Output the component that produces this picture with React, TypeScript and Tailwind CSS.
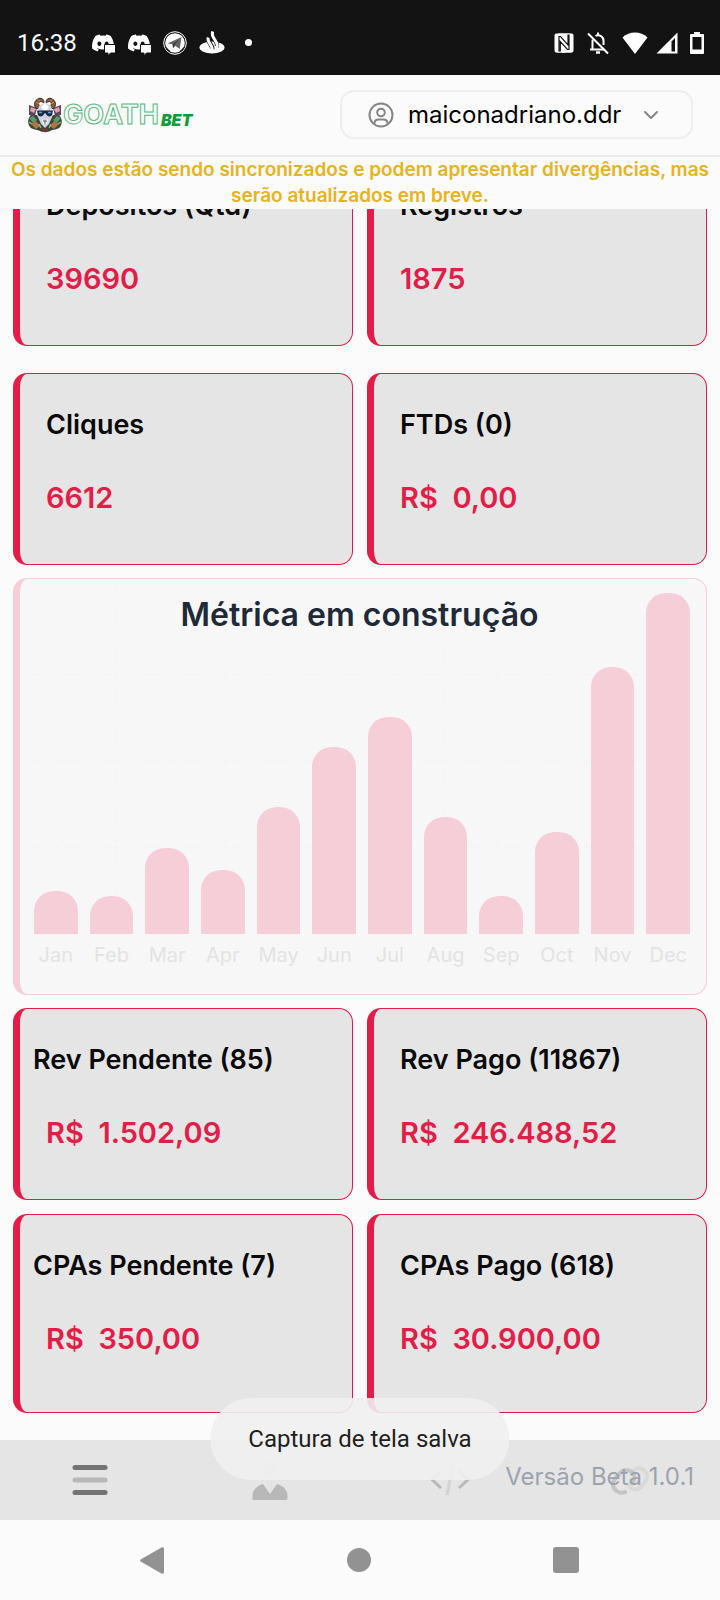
import React from "react";
import { FaDiscord } from "react-icons/fa";
import { ChevronDown } from "lucide-react";

const months = [
  { name: "Jan", height: 43 },
  { name: "Feb", height: 38 },
  { name: "Mar", height: 86 },
  { name: "Apr", height: 64 },
  { name: "May", height: 127 },
  { name: "Jun", height: 187 },
  { name: "Jul", height: 217 },
  { name: "Aug", height: 117 },
  { name: "Sep", height: 38 },
  { name: "Oct", height: 102 },
  { name: "Nov", height: 267 },
  { name: "Dec", height: 341 },
];

function DiscordNotification() {
  return (
    <span className="relative block h-6 w-6">
      <FaDiscord className="h-6 w-6" />
      <svg viewBox="0 0 12 12" className="absolute -bottom-px -right-px h-3 w-3" aria-hidden="true">
        <path d="M.500.500h11v8.500H6.500L4 12V9H.500z" fill="#fff" stroke="#131313" strokeWidth="1" />
      </svg>
    </span>
  );
}

function StatusBar() {
  return (
    <div className="flex h-[75px] items-center justify-between bg-[#131313] pl-[17px] pr-4 pt-2.5 text-white">
      <div className="flex items-center gap-3">
        <span className="mr-0.5 font-['Roboto',sans-serif] text-2xl leading-6">16:38</span>
        <DiscordNotification />
        <DiscordNotification />
        <svg viewBox="0 0 24 24" className="h-6 w-6" aria-hidden="true">
          <circle cx="12" cy="12" r="11.300" fill="none" stroke="#fff" strokeWidth="1" />
          <circle cx="12" cy="12" r="9.800" fill="#fff" />
          <path d="M4.500 12.500 18.500 6l-1.800 12-4.300-3-2.400 2.300-.4-4z" fill="#666" />
          <path d="m9.600 13.300 6.700-5-5 5.700-1.300 3.300z" fill="#333" />
          <path d="M3 16.500a10 10 0 0 0 4 4.200M17 20.700a10 10 0 0 0 4-4.200" stroke="#131313" strokeWidth="1.500" fill="none" />
        </svg>
        <svg viewBox="0 0 26 24" className="h-6 w-[26px]" aria-hidden="true">
          <ellipse cx="13" cy="16.500" rx="12.500" ry="6" fill="#fff" />
          <path d="M9.500 6.500c-.8 2 0 3.500 1 5.200l2 3.300c.7 1.200 1 2 .8 3M13.800 1c-.8 2-.5 3.500.5 5.200l3 5c.9 1.500 1 3 .3 4.500" fill="none" stroke="#131313" strokeWidth="4.400" />
          <path d="M9.300 6.500c-.8 2 0 3.500 1 5.200l2 3.300c.7 1.200 1 2.500.8 4M13.800.5c-.8 2-.5 4 .5 5.700l3 5c.9 1.500 1.200 3.500.3 5.500" fill="none" stroke="#fff" strokeWidth="3" />
        </svg>
        <span className="ml-2 h-[7px] w-[7px] rounded-full bg-white" />
      </div>
      <div className="flex items-center gap-2">
        <svg viewBox="0 0 20 20" className="mr-1 h-5 w-5" aria-hidden="true">
          <path d="M2 .5c2-.5 14-.5 16 0 1 .3 1.500 1 1.500 2.500v14c0 1.500-.5 2.200-1.500 2.500-2 .5-14 .5-16 0-1-.3-1.500-1-1.500-2.500V3C.5 1.500 1 .8 2 .5z" fill="#fff" />
          <path d="M5 18V3.500h1.500L14 12V2h1v14.500h-1.500L6.300 8.500V18z" fill="none" stroke="#131313" strokeWidth="1.200" />
        </svg>
        <svg viewBox="0 0 24 24" className="mr-1 h-6 w-6" fill="none" stroke="#fff" strokeWidth="2" aria-hidden="true">
          <path d="M9.500 4.800A5.500 5.500 0 0 1 17.500 10v4M6.800 8.500c-.2.500-.3 1-.3 1.700V18M4 18.500h14.500" />
          <path d="M12 1.500v3M2 2.500l20 20" />
          <path d="M10 21.500h4" strokeWidth="2.500" />
        </svg>
        <svg viewBox="0 0 26 22" className="h-[22px] w-[26px]" aria-hidden="true">
          <path d="M13 22 .500 5.500C4 2 8.300.500 13 .500S22 2 25.500 5.500z" fill="#fff" />
        </svg>
        <svg viewBox="0 0 22 22" className="mr-1 h-[22px] w-[22px]" aria-hidden="true">
          <path d="M.500 21.500 21.500.500v21z" fill="#fff" />
          <path d="M15.500 9.500 19 6v13.500h-3.500z" fill="#131313" />
        </svg>
        <svg viewBox="0 0 14 22" className="h-[22px] w-3.5" aria-hidden="true">
          <path d="M4 0h6v2h3a1 1 0 0 1 1 1v18a1 1 0 0 1-1 1H1a1 1 0 0 1-1-1V3a1 1 0 0 1 1-1h3z" fill="#fff" />
          <path d="M2.500 5h9v12.500h-9z" fill="#131313" />
        </svg>
      </div>
    </div>
  );
}

function GoatMark() {
  return (
    <svg viewBox="0 0 36 36" className="h-9 w-9" aria-hidden="true">
      <path d="M4 18c-3 3-4 8-1 12 2 3 7 2 10 4 2 1.500 8 1.500 10 0 3-2 8-1 10-4 3-4 2-9-1-12z" fill="#3a4636" />
      <path d="M2 8l8 3-2 8-6-1z" fill="#5b4560" />
      <path d="M34 8l-8 3 2 8 6-1z" fill="#5b4560" />
      <path d="M4 10l5 2-2 4-4-2zM32 10l-5 2 2 4 4-2z" fill="#d8a3ad" />
      <path d="M10 12C6 9 7 3 12 1.500c3-.8 5 1 5 4l-3-1c-3 0-3 3-1 5z" fill="#8a5836" stroke="#3a2620" strokeWidth="1" />
      <path d="M26 12c4-3 3-9-2-10.500-3-.8-5 1-5 4l3-1c3 0 3 3 1 5z" fill="#8a5836" stroke="#3a2620" strokeWidth="1" />
      <path d="M9 5l3 2M11 2.500l2 2M27 5l-3 2M25 2.500l-2 2" stroke="#d79b62" strokeWidth="1" />
      <path d="M12 9l6-4 6 4 2 9-4 9-4 4-4-4-4-9z" fill="#cfd2e0" />
      <path d="M14 10l4-4 4 4-2 3h-4z" fill="#fff" />
      <path d="M10 13.500h16l-1 4.500c-1 2-5 2-6-1l-1-1-1 1c-1 3-5 3-6 1z" fill="#1b2b45" />
      <path d="M12 15.500h3M21 15.500h3" stroke="#5ba3dc" strokeWidth="1.500" />
      <path d="M15 22l3 2 3-2-1 5h-4z" fill="#fff" />
      <path d="M16 24h4M18 24v3" stroke="#4c4b60" strokeWidth="1" />
      <path d="M2 21l4-2 4 4-4 3zM34 21l-4-2-4 4 4 3z" fill="#5c9a6e" />
      <path d="M4 27l5-3 4 5-4 3zM32 27l-5-3-4 5 4 3z" fill="#b0743f" />
      <path d="M2 25l3 2M31 27l3-2M12 27l2 4M24 27l-2 4" stroke="#8abb95" strokeWidth="1.500" />
      <path d="M14 30l4 2 4-2-2 5h-4z" fill="#6d3c36" />
    </svg>
  );
}

function Header() {
  return (
    <header className="flex items-center justify-between border-b-2 border-[#ececec] px-[27px] pb-4 pt-[15px]">
      <a href="#" aria-label="Goath Bet" className="flex items-center">
        <GoatMark />
        <span className="font-['Inter',sans-serif] text-[27px] font-bold leading-8 text-[#fbfbfb] [-webkit-text-stroke:1px_#55b878]">
          GOATH
        </span>
        <span className="ml-0.5 pt-2.5 font-['Inter',sans-serif] text-base font-black italic leading-4 text-[#119b3c]">BET</span>
      </a>
      <button
        type="button"
        className="flex h-[49px] w-[353px] items-center rounded-[14px] border-2 border-[#eeeeee] pl-[26px] pr-7 font-['Inter',sans-serif] text-2xl text-black"
      >
        <svg viewBox="0 0 26 26" className="h-[26px] w-[26px]" fill="none" stroke="#858585" strokeWidth="2" aria-hidden="true">
          <circle cx="13" cy="13" r="11.500" />
          <circle cx="13" cy="10.500" r="3.800" />
          <path d="M6.500 21.500c0-3 1.500-4 4-4h5c2.500 0 4 1 4 4" />
        </svg>
        <span className="ml-3.5 flex-1 text-left">maiconadriano.ddr</span>
        <ChevronDown className="h-6 w-6 text-[#858585]" strokeWidth={2} />
      </button>
    </header>
  );
}

type StatProps = { title: string; value: string; outdent?: boolean; tall?: boolean };

function StatCard({ title, value, outdent, tall }: StatProps) {
  return (
    <article
      className={`rounded-[14px] border border-l-[7px] border-[#e11d48] bg-[#e5e5e5] pl-[26px] pr-3 pt-[33px] ${tall ? "pb-[55px]" : "pb-12"}`}
    >
      <h2 className={`whitespace-nowrap text-[27px] font-semibold leading-9 text-[#0a0a0a] ${outdent ? "-ml-[13px]" : ""}`}>{title}</h2>
      <p className="mt-[37px] whitespace-pre text-[29px] font-semibold leading-9 text-[#e11d48]">{value}</p>
    </article>
  );
}

function StatRow({ children }: { children: React.ReactNode }) {
  return <div className="grid grid-cols-2 gap-[14px]">{children}</div>;
}

function Chart() {
  return (
    <section className="relative my-[13px] rounded-[14px] border border-l-[7px] border-[#f6ced7] bg-[#f7f7f7] pb-[25px] pl-[14px] pr-4 pt-[9px]">
      <div className="relative">
        <svg className="absolute inset-0 h-full w-full" aria-hidden="true">
          {[0, 25, 50, 75].map((y) => (
            <line key={y} x1="0" x2="100%" y1={`${y}%`} y2={`${y}%`} stroke="#f3f3f3" strokeDasharray="5 5" />
          ))}
          {months.map((m, i) => (
            <line
              key={m.name}
              x1={`${((i + 0.5) / 12) * 100}%`}
              x2={`${((i + 0.5) / 12) * 100}%`}
              y1="0"
              y2="100%"
              stroke="#f4f4f4"
              strokeDasharray="5 5"
            />
          ))}
        </svg>
        <div className="relative flex h-[346px] items-end gap-3">
          {months.map((m) => (
            <div key={m.name} className="flex-1 rounded-t-[20px] bg-[#f6ced7]" style={{ height: m.height }} />
          ))}
        </div>
      </div>
      <div className="mt-[7px] flex gap-3 font-['Inter',sans-serif] text-xl leading-7 text-[#e3e3e3]">
        {months.map((m) => (
          <span key={m.name} className="flex flex-1 basis-0 justify-center">
            {m.name}
          </span>
        ))}
      </div>
      <h2 className="absolute -left-[7px] right-0 top-4 text-center text-[32px] font-semibold leading-10 text-[#1f2937]">
        Métrica em construção
      </h2>
    </section>
  );
}

function BottomNav() {
  return (
    <nav className="relative grid h-20 grid-cols-4 place-items-center bg-[#e5e5e5]">
      <button type="button" aria-label="Menu">
        <svg viewBox="0 0 36 30" className="h-[30px] w-9" aria-hidden="true">
          <rect x=".5" width="35" height="5" rx="2.500" fill="#737373" />
          <rect x=".5" y="12.500" width="35" height="5" rx="2.500" fill="#b8b8b8" />
          <rect x=".5" y="25" width="35" height="5" rx="2.500" fill="#737373" />
        </svg>
      </button>
      <button type="button" aria-label="Perfil">
        <svg viewBox="0 0 36 40" className="h-10 w-9" aria-hidden="true">
          <circle cx="18" cy="9" r="8" fill="#d9d9d9" />
          <path d="M.500 40v-4c0-6 4-10 10.500-12l7 10 7-10C31.500 26 35.500 30 35.500 36v2c0 1-.6 2-2 2z" fill="#b8b8b8" />
        </svg>
      </button>
      <button type="button" aria-label="Código">
        <svg viewBox="0 0 40 32" className="h-8 w-10" fill="none" strokeWidth="3" aria-hidden="true">
          <path d="M11 7 2 15.500 11 24M29 7l9 8.500L29 24" stroke="#b8b8b8" />
          <path d="m23 1-6 30" stroke="#d2d2d2" />
        </svg>
      </button>
      <button type="button" aria-label="Links">
        <svg viewBox="0 0 38 32" className="h-8 w-[38px]" fill="none" strokeWidth="4" strokeLinecap="round" aria-hidden="true">
          <path d="M18 21c2 5 8 6 12 2l4-5c3-4 3-9-1-12s-8-2-11 1" stroke="#d9d9d9" />
          <path d="M14 28c-4 2-9 0-11-4s-1-7 1-9l5-6c3-3 8-4 12-1 3 3 3 7 1 10" stroke="#c4c4c4" />
        </svg>
      </button>
      <span className="absolute right-[26px] top-[21px] font-['Inter',sans-serif] text-2xl leading-8 text-[#9ca3af]">
        Versão Beta 1.0.1
      </span>
      <div
        role="status"
        className="absolute -top-[42px] left-1/2 -translate-x-1/2 whitespace-nowrap rounded-[41px] bg-[#efefef]/90 px-[38px] py-[25px] font-['Roboto',sans-serif] text-2xl leading-8 text-[#1f1f1f]"
      >
        Captura de tela salva
      </div>
    </nav>
  );
}

function SystemNav() {
  return (
    <div className="flex h-20 items-center justify-between pl-[140px] pr-[141px]">
      <button type="button" aria-label="Voltar">
        <svg viewBox="0 0 24 27" className="h-[27px] w-6" fill="#929292" aria-hidden="true">
          <path d="M1 12.200 21.500.500c1.200-.6 2.500 0 2.500 1.200v23.600c0 1.200-1.300 1.800-2.500 1.200L1 14.800c-1.300-.8-1.300-1.800 0-2.600z" />
        </svg>
      </button>
      <button type="button" aria-label="Início" className="h-6 w-6 rounded-full bg-[#929292]" />
      <button type="button" aria-label="Recentes" className="h-[26px] w-[26px] rounded-[3px] bg-[#929292]" />
    </div>
  );
}

export default function App() {
  return (
    <div className="flex min-h-screen flex-col bg-[#fbfbfb] font-['Inter',sans-serif]">
      <StatusBar />
      <Header />
      <p className="px-2 text-center text-[19px] font-semibold leading-[26px] text-[#e7b321]">
        Os dados estão sendo sincronizados e podem apresentar divergências, mas serão atualizados em breve.
      </p>
      <main className="flex-1 overflow-hidden px-[13px] pb-[27px]">
        <div className="-mt-[55px] grid gap-[27px]">
          <StatRow>
            <StatCard title="Depósitos (Qtd)" value="39690" />
            <StatCard title="Registros" value="1875" />
          </StatRow>
          <StatRow>
            <StatCard title="Cliques" value="6612" />
            <StatCard title="FTDs (0)" value="R$  0,00" />
          </StatRow>
        </div>
        <Chart />
        <div className="grid gap-[14px]">
          <StatRow>
            <StatCard title="Rev Pendente (85)" value="R$  1.502,09" outdent />
            <StatCard title="Rev Pago (11867)" value="R$  246.488,52" />
          </StatRow>
          <StatRow>
            <StatCard title="CPAs Pendente (7)" value="R$  350,00" outdent tall />
            <StatCard title="CPAs Pago (618)" value="R$  30.900,00" tall />
          </StatRow>
        </div>
      </main>
      <BottomNav />
      <SystemNav />
    </div>
  );
}
